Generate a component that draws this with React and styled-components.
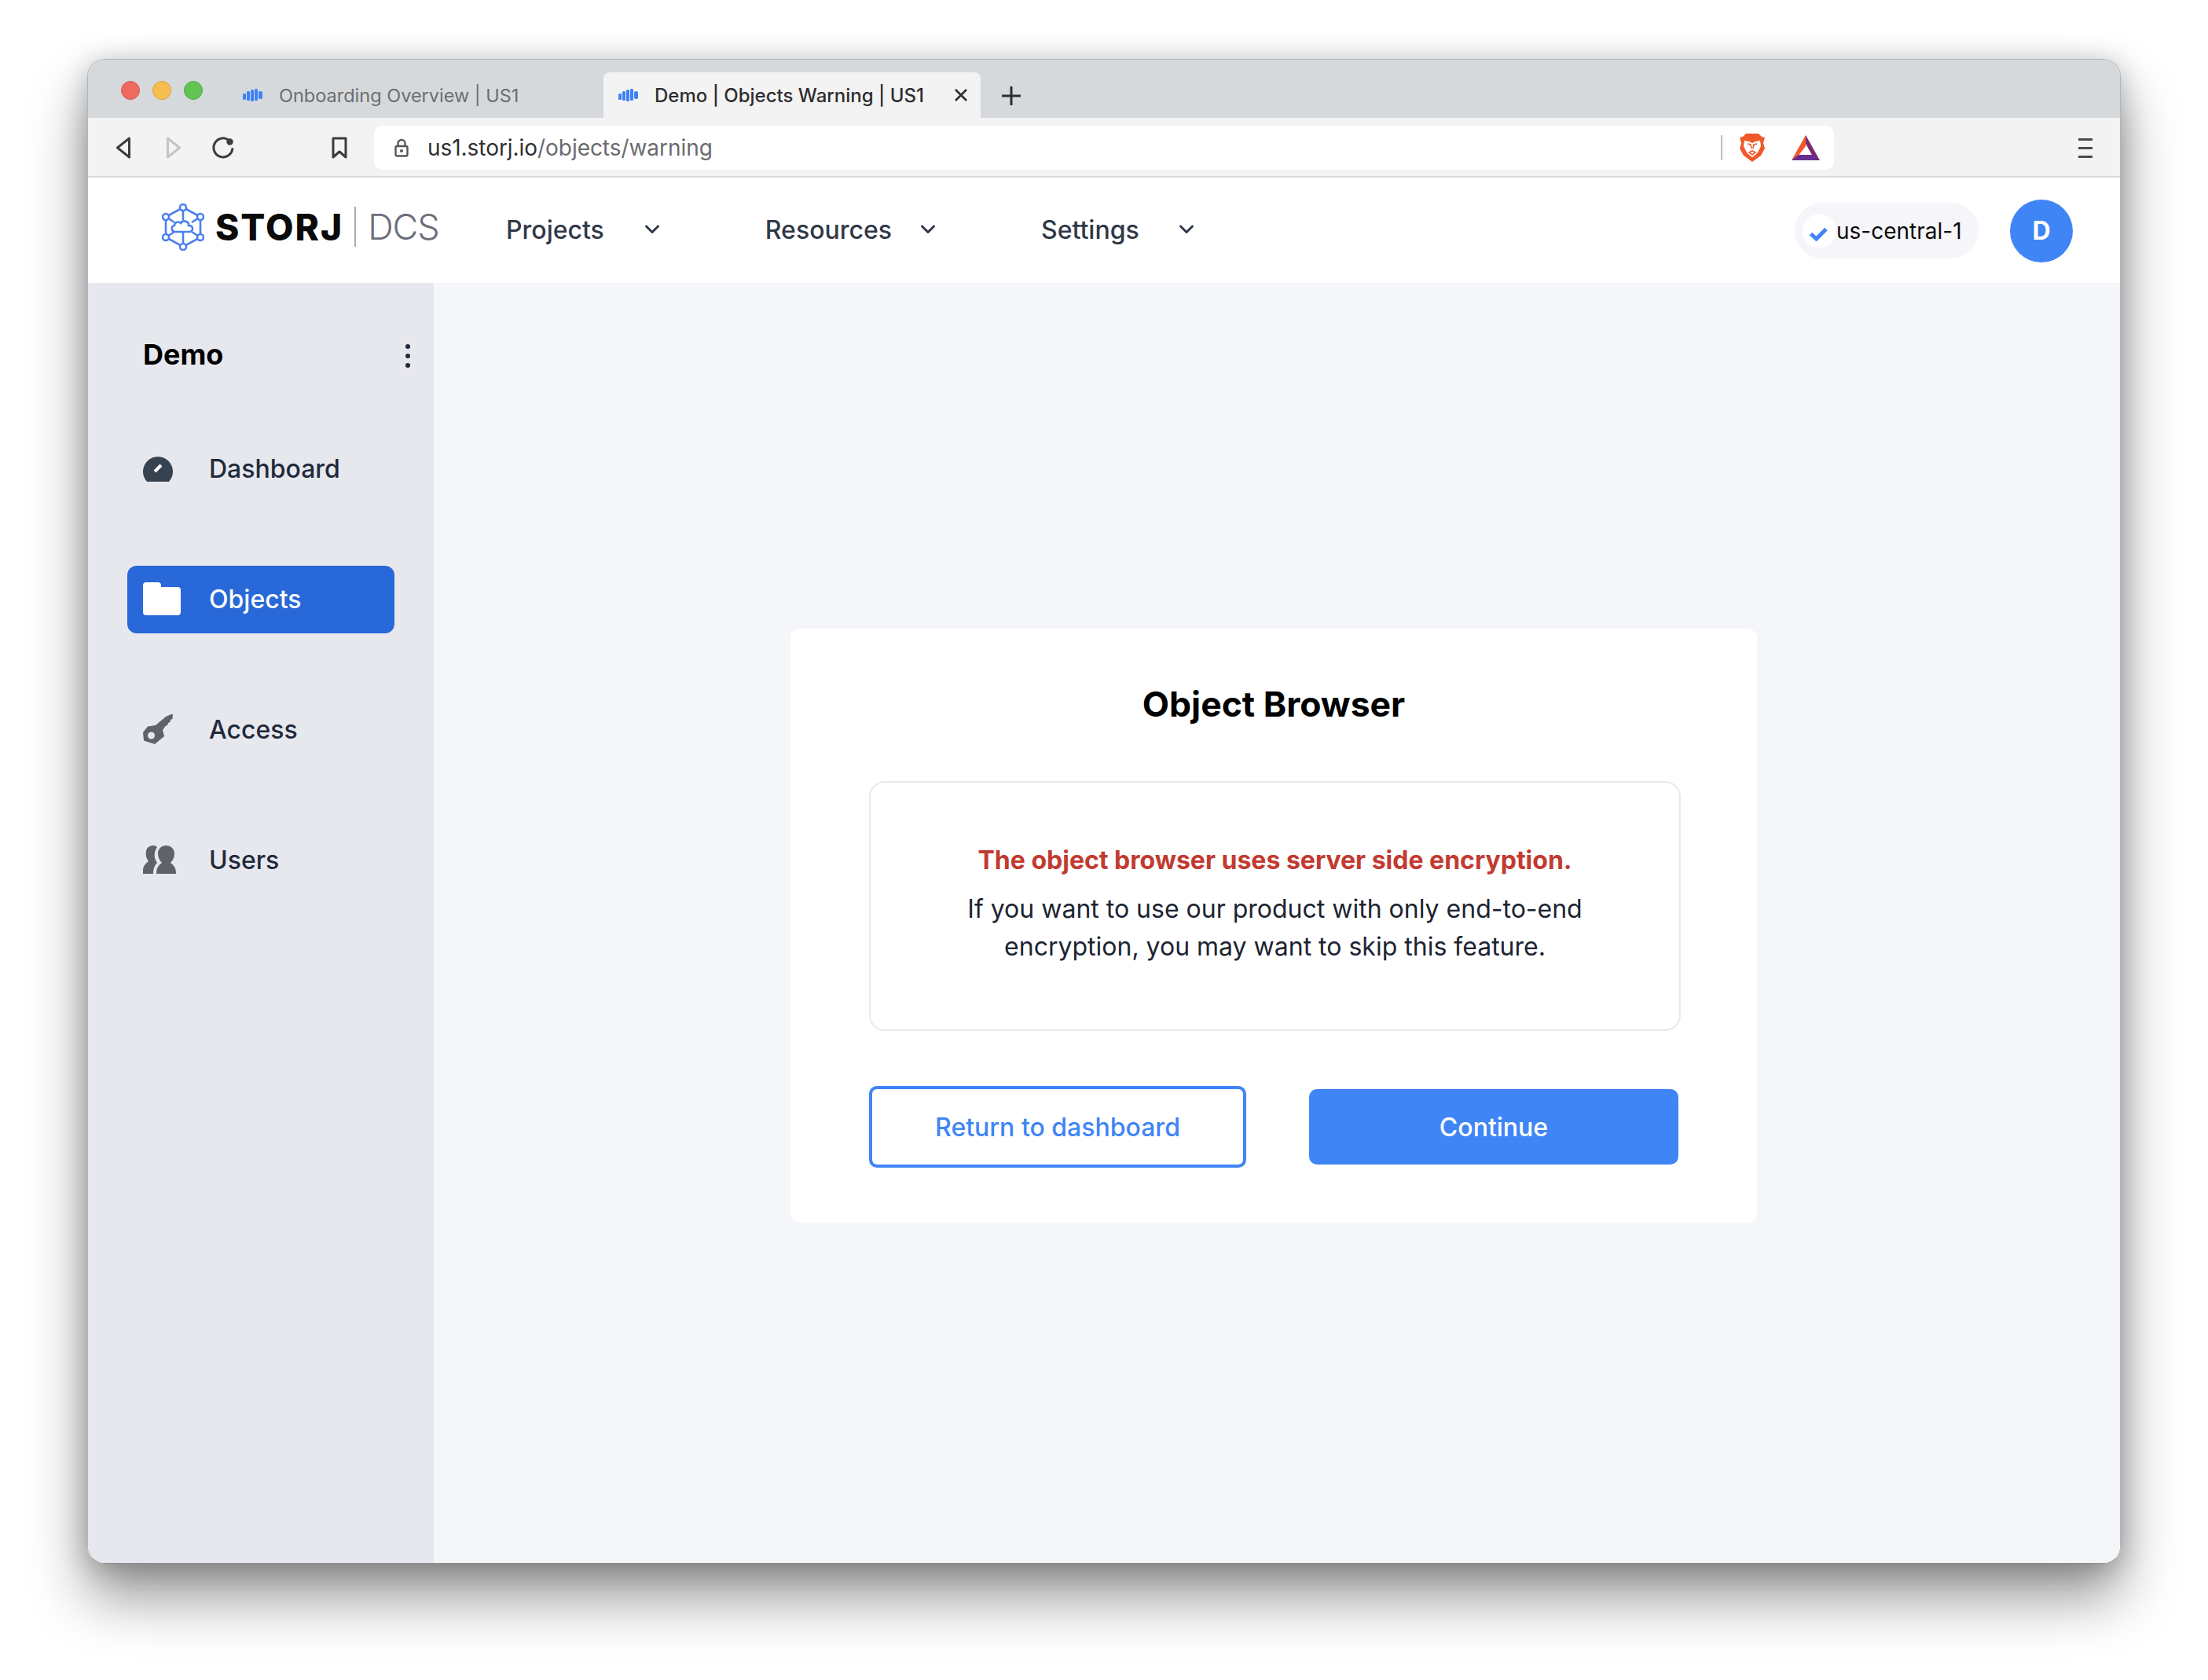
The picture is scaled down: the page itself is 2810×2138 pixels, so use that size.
import React from "react";
import styled, { createGlobalStyle } from "styled-components";

const GlobalStyle = createGlobalStyle`
  html, body {
    margin: 0;
    padding: 0;
    background: #ffffff;
    font-family: "Inter", "Liberation Sans", sans-serif;
  }
  * { box-sizing: border-box; }
`;

const Page = styled.div`
  width: 2810px;
  height: 2138px;
  padding: 75px 0 0 111px;
  overflow: hidden;
  background: #ffffff;
`;

const Shell = styled.div`
  width: 2588px;
  height: 1915px;
  border-radius: 22px;
  box-shadow: 0 42px 72px rgba(0, 0, 0, 0.42), 0 4px 34px rgba(0, 0, 0, 0.22);
`;

const Window = styled.div`
  height: 100%;
  display: flex;
  flex-direction: column;
  border-radius: 22px;
  overflow: hidden;
  border: 1px solid #b4b5b7;
  border-bottom-color: #8e8e90;
`;

const TabBar = styled.div`
  height: 74px;
  flex: none;
  display: flex;
  align-items: flex-end;
  padding-left: 42px;
  background: #d6d9dc;
`;

const Lights = styled.div`
  display: flex;
  gap: 16px;
  width: 155px;
  height: 47px;
  flex: none;
`;

const Light = styled.span`
  width: 24px;
  height: 24px;
  border-radius: 50%;
  background: ${(p) => p.$color};
  border: 1px solid ${(p) => p.$edge};
`;

const Tab = styled.div`
  width: ${(p) => p.$width}px;
  height: 58px;
  flex: none;
  display: flex;
  align-items: center;
  gap: 19px;
  padding-left: ${(p) => p.$pad}px;
  border-radius: 8px 8px 0 0;
  background: ${(p) => (p.$active ? "#f3f3f3" : "transparent")};
  color: ${(p) => (p.$active ? "#2d2d2f" : "#6b6d70")};
  font-size: ${(p) => (p.$active ? 24 : 23.5)}px;
  font-weight: ${(p) => (p.$active ? 500 : 400)};
  white-space: nowrap;
`;

const TabLabel = styled.span`
  margin-left: 1px;
`;

const CloseMark = styled.svg`
  margin-left: 19px;
`;

const NewTab = styled.svg`
  margin: 0 0 15px 26px;
`;

const Toolbar = styled.div`
  height: 76px;
  flex: none;
  display: flex;
  align-items: center;
  padding: 2px 35px 0 35px;
  background: #f3f3f3;
  border-bottom: 2px solid #d9dadc;
`;

const NavButtons = styled.div`
  display: flex;
  align-items: center;
  width: 329px;
  flex: none;
`;

const NavButton = styled.span`
  display: flex;
  margin-left: ${(p) => p.$left}px;
`;

const AddressBar = styled.div`
  width: 1858px;
  height: 56px;
  display: flex;
  align-items: center;
  padding: 0 18px 0 26px;
  border-radius: 10px;
  background: #ffffff;
`;

const UrlText = styled.span`
  margin-left: 24px;
  flex: 1;
  font-size: 28px;
  letter-spacing: -0.05px;
  color: #6a6a6c;
  b {
    font-weight: 400;
    color: #2f2f31;
  }
`;

const Separator = styled.span`
  width: 2px;
  height: 32px;
  margin-right: 22px;
  background: #bdbdbd;
`;

const ExtensionGap = styled.span`
  width: 34px;
`;

const Hamburger = styled.div`
  margin-left: auto;
  display: flex;
  flex-direction: column;
  gap: 8px;
  span {
    width: 18px;
    height: 3px;
    background: #4a4a4a;
  }
`;

const Header = styled.div`
  height: 134px;
  flex: none;
  display: flex;
  align-items: center;
  padding: 0 60px 0 94px;
  background: #ffffff;
`;

const Logo = styled.div`
  display: flex;
  align-items: center;
  width: 438px;
  flex: none;
  margin-bottom: 9px;
`;

const LogoWord = styled.span`
  margin-left: 14px;
  font-size: 46px;
  font-weight: 800;
  letter-spacing: 2px;
  color: #0a0a0a;
`;

const LogoDivider = styled.span`
  width: 2px;
  height: 51px;
  margin: 0 15px 0 14px;
  background: #a9abb1;
`;

const LogoProduct = styled.span`
  font-size: 45px;
  font-weight: 300;
  letter-spacing: -1px;
  color: #6b6e79;
`;

const Menu = styled.div`
  display: flex;
  align-items: center;
  gap: 134px;
  margin-bottom: 2px;
`;

const MenuItem = styled.div`
  display: flex;
  align-items: center;
  gap: ${(p) => p.$gap}px;
  font-size: 32px;
  font-weight: 500;
  color: #2f3947;
`;

const HeaderRight = styled.div`
  margin: 1px 0 0 auto;
  display: flex;
  align-items: center;
  gap: 40px;
`;

const RegionPill = styled.div`
  width: 234px;
  height: 71px;
  display: flex;
  align-items: center;
  padding-left: 10px;
  border-radius: 36px;
  background: #f5f5fa;
  font-size: 28px;
  color: #0b0b0b;
`;

const RegionCheck = styled.span`
  width: 43px;
  height: 44px;
  flex: none;
  display: flex;
  align-items: center;
  justify-content: center;
  padding: 8px 3px 0 0;
  border-radius: 50%;
  background: #ffffff;
`;

const Avatar = styled.div`
  width: 80px;
  height: 80px;
  display: flex;
  align-items: center;
  justify-content: center;
  border-radius: 50%;
  background: #3f85f6;
  color: #ffffff;
  font-size: 32px;
  font-weight: 700;
`;

const Body = styled.div`
  flex: 1;
  display: flex;
  min-height: 0;
`;

const Sidebar = styled.aside`
  width: 440px;
  flex: none;
  padding: 0 50px;
  background: #e7e8ee;
`;

const ProjectRow = styled.div`
  height: 182px;
  margin-bottom: 12px;
  display: flex;
  align-items: center;
  justify-content: space-between;
  padding-left: 20px;
  font-size: 36px;
  font-weight: 700;
  color: #000000;
`;

const Dots = styled.div`
  display: flex;
  flex-direction: column;
  gap: 6px;
  margin: 4px -20px 0 0;
  span {
    width: 6px;
    height: 6px;
    border-radius: 50%;
    background: #1e2a3c;
  }
`;

const NavList = styled.nav`
  display: flex;
  flex-direction: column;
  gap: 80px;
`;

const NavRow = styled.div`
  height: 86px;
  width: 340px;
  display: flex;
  align-items: center;
  padding: 0 0 2px 20px;
  border-radius: 12px;
  background: ${(p) => (p.$active ? "#2868d8" : "transparent")};
  color: ${(p) => (p.$active ? "#ffffff" : "#1f2a3b")};
  font-size: 32px;
  font-weight: 500;
`;

const NavIcon = styled.span`
  width: 84px;
  flex: none;
  display: flex;
  align-items: center;
`;

const Main = styled.main`
  flex: 1;
  padding: 440px 0 0 454px;
  background: #f5f6fa;
`;

const Card = styled.section`
  width: 1230px;
  height: 756px;
  padding: 0 100px;
  border-radius: 12px;
  background: #ffffff;
`;

const Title = styled.h1`
  margin: 0 0 2px;
  height: 192px;
  display: flex;
  align-items: center;
  justify-content: center;
  font-size: 44.5px;
  font-weight: 700;
  color: #000000;
`;

const Notice = styled.div`
  width: 1033px;
  height: 318px;
  padding-top: 75px;
  border: 2px solid #e8e9ee;
  border-radius: 20px;
  text-align: center;
`;

const NoticeHeading = styled.div`
  font-size: 32px;
  font-weight: 700;
  line-height: 48px;
  margin-bottom: 14px;
  color: #c23a30;
`;

const NoticeText = styled.p`
  margin: 0;
  font-size: 32px;
  line-height: 48px;
  color: #1c2432;
`;

const Actions = styled.div`
  display: flex;
  align-items: center;
  margin-top: 70px;
`;

const Button = styled.button`
  height: ${(p) => (p.$primary ? 96 : 104)}px;
  width: ${(p) => (p.$primary ? 470 : 480)}px;
  margin-left: ${(p) => (p.$primary ? 80 : 0)}px;
  border: ${(p) => (p.$primary ? "0" : "4px solid #3f85f6")};
  border-radius: 10px;
  background: ${(p) => (p.$primary ? "#3f85f6" : "#ffffff")};
  color: ${(p) => (p.$primary ? "#ffffff" : "#3f85f6")};
  font-family: inherit;
  font-size: 32px;
  font-weight: 500;
`;

const Favicon = () => (
  <svg width="26" height="16" viewBox="0 0 26 16" fill="#3f82f7">
    <rect x="0" y="6" width="4" height="8" rx="1.5" />
    <rect x="5" y="3" width="4" height="12" rx="1.5" />
    <rect x="10" y="1" width="4" height="15" rx="1.5" />
    <rect x="15" y="0" width="4" height="15" rx="1.5" />
    <rect x="20" y="3" width="5" height="10" rx="2" />
  </svg>
);

const BackIcon = ({ flip, color }) => (
  <svg width="20" height="28" viewBox="0 0 20 28" style={flip ? { transform: "scaleX(-1)" } : undefined}>
    <path d="M17.5 2 L2.5 14 L17.5 26 Z" fill="none" stroke={color} strokeWidth="3" strokeLinejoin="round" />
  </svg>
);

const ReloadIcon = () => (
  <svg width="28" height="28" viewBox="0 0 28 28">
    <path d="M21 4.2 A12 12 0 1 0 25.8 15.5" fill="none" stroke="#3c3c3c" strokeWidth="3" strokeLinecap="round" />
    <circle cx="22.5" cy="6.5" r="4.2" fill="#3c3c3c" />
  </svg>
);

const BookmarkIcon = () => (
  <svg width="22" height="28" viewBox="0 0 22 28">
    <path d="M3 2 H19 V26 L11 19 L3 26 Z" fill="none" stroke="#3c3c3c" strokeWidth="3" strokeLinejoin="round" />
  </svg>
);

const LockIcon = () => (
  <svg width="18" height="24" viewBox="0 0 18 24">
    <path d="M4.5 10 V6.5 A4.5 4.5 0 0 1 13.5 6.5 V10" fill="none" stroke="#55565a" strokeWidth="2.4" />
    <rect x="1.5" y="10" width="15" height="12.5" rx="2" fill="none" stroke="#55565a" strokeWidth="2.4" />
    <circle cx="9" cy="16" r="2" fill="#55565a" />
  </svg>
);

const BraveIcon = () => (
  <svg width="32" height="36" viewBox="0 0 32 36">
    <path d="M8 0 H24 L28 4 L32 5 L30 12 L32 19 L27 28 L16 36 L5 28 L0 19 L2 12 L0 5 L4 4 Z" fill="#f0592a" />
    <path d="M6 9 L12 10 L16 12 L20 10 L26 9 L27 16 L23 24 L19 28 L16 30 L13 28 L9 24 L5 16 Z" fill="#ffffff" />
    <path d="M10 13 L14 14 L15 19 M22 13 L18 14 L17 19 M12 24 L16 22 L20 24 L16 27 Z" fill="none" stroke="#f0592a" strokeWidth="1.6" />
  </svg>
);

const BatIcon = () => (
  <svg width="36" height="32" viewBox="0 0 36 32">
    <polygon points="18,0 18,14 8,27 0,32" fill="#f1592c" />
    <polygon points="18,0 36,32 27,27 18,11" fill="#7d2a6d" />
    <polygon points="0,32 36,32 27,25 9,25" fill="#662d91" />
  </svg>
);

const StorjLogo = () => (
  <svg width="54" height="60" viewBox="0 0 54 60" fill="none" stroke="#4b7ff0" strokeWidth="2.6">
    <path d="M27 5 L49 17 V43 L27 55 L5 43 V17 Z" />
    <path d="M27 5 V21 M49 17 L38 24 M5 17 L16 24 M49 43 L38 36 M5 43 L16 36 M27 55 V36" />
    <path d="M17 36 C12 36 11 29 16 28 C16 24 21 22 24 25 C27 20 35 23 34 28 C41 28 40 36 35 36 Z" fill="#ffffff" />
    <g fill="#ffffff">
      <circle cx="27" cy="5" r="4" />
      <circle cx="49" cy="17" r="4" />
      <circle cx="49" cy="43" r="4" />
      <circle cx="27" cy="55" r="4" />
      <circle cx="5" cy="43" r="4" />
      <circle cx="5" cy="17" r="4" />
    </g>
  </svg>
);

const Chevron = () => (
  <svg width="20" height="12" viewBox="0 0 20 12">
    <path d="M2.5 2 L10 9.5 L17.5 2" fill="none" stroke="#2f3947" strokeWidth="3" strokeLinecap="round" strokeLinejoin="round" />
  </svg>
);

const GaugeIcon = () => (
  <svg width="38" height="34" viewBox="0 0 38 34">
    <path d="M5 34 A19 19 0 1 1 33 34 Z" fill="#374250" />
    <path d="M15 21 L23 13" stroke="#ffffff" strokeWidth="4" />
  </svg>
);

const FolderIcon = () => (
  <svg width="48" height="42" viewBox="0 0 48 42">
    <path d="M0 4 A4 4 0 0 1 4 0 H19 A4 4 0 0 1 23 4 V6 H44 A4 4 0 0 1 48 10 V38 A4 4 0 0 1 44 42 H4 A4 4 0 0 1 0 38 Z" fill="#ffffff" />
  </svg>
);

const KeyIcon = () => (
  <svg width="38" height="38" viewBox="0 0 38 38">
    <path d="M29 3 L36 0 H38 L37.5 6 L35 7 L34.5 10 L32 11 L31 14 L28.5 15 L25 20 L27 28 L15 38 L1 33.5 L0 23 L6 15.5 L16 14 Z" fill="#5d6369" />
    <circle cx="10.5" cy="27" r="4.5" fill="#e7e8ee" />
  </svg>
);

const UsersIcon = () => (
  <svg width="42" height="36" viewBox="0 0 42 36" fill="#5d6369">
    <path d="M0 36 V31 C0 25 5 22 7 20 C4 16 3 12 4 7 C5 2 9 0 13 0 C16 0 17 1 18 2 C15 6 14 11 15 16 C16 19 17 21 18 22 C15 25 13 29 13 36 Z" />
    <path d="M17 36 C17 28 20 25 24 22 C21 19 19 15 19 10 C19 4 24 0 29 0 C35 0 40 4 40 10 C40 15 38 19 35 22 C39 25 42 28 42 36 Z" />
  </svg>
);

const navItems = [
  { label: "Dashboard", icon: <GaugeIcon /> },
  { label: "Objects", icon: <FolderIcon />, active: true },
  { label: "Access", icon: <KeyIcon /> },
  { label: "Users", icon: <UsersIcon /> },
];

const menuItems = [
  { label: "Projects", gap: 51 },
  { label: "Resources", gap: 36 },
  { label: "Settings", gap: 50 },
];

export default function App() {
  return (
    <>
      <GlobalStyle />
      <Page>
        <Shell>
          <Window>
            <TabBar>
              <Lights>
                <Light $color="#ee6a5f" $edge="#d6564c" />
                <Light $color="#f6be4f" $edge="#dca23a" />
                <Light $color="#61c454" $edge="#4eab42" />
              </Lights>
              <Tab $width="459" $pad="0">
                <Favicon />
                <TabLabel>Onboarding Overview | US1</TabLabel>
              </Tab>
              <Tab $active $width="480" $pad="19">
                <Favicon />
                <TabLabel>Demo | Objects Warning | US1</TabLabel>
                <CloseMark width="18" height="18" viewBox="0 0 18 18">
                  <path d="M2 2 L16 16 M16 2 L2 16" stroke="#2d2d2f" strokeWidth="2.6" />
                </CloseMark>
              </Tab>
              <NewTab width="26" height="26" viewBox="0 0 26 26">
                <path d="M13 1 V25 M1 13 H25" stroke="#2d2d2f" strokeWidth="3" />
              </NewTab>
            </TabBar>
            <Toolbar>
              <NavButtons>
                <NavButton $left="0">
                  <BackIcon color="#3c3c3c" />
                </NavButton>
                <NavButton $left="44">
                  <BackIcon flip color="#c4c4c4" />
                </NavButton>
                <NavButton $left="39">
                  <ReloadIcon />
                </NavButton>
                <NavButton $left="123">
                  <BookmarkIcon />
                </NavButton>
              </NavButtons>
              <AddressBar>
                <LockIcon />
                <UrlText>
                  <b>us1.storj.io</b>/objects/warning
                </UrlText>
                <Separator />
                <BraveIcon />
                <ExtensionGap />
                <BatIcon />
              </AddressBar>
              <Hamburger>
                <span />
                <span />
                <span />
              </Hamburger>
            </Toolbar>
            <Header>
              <Logo>
                <StorjLogo />
                <LogoWord>STORJ</LogoWord>
                <LogoDivider />
                <LogoProduct>DCS</LogoProduct>
              </Logo>
              <Menu>
                {menuItems.map((item) => (
                  <MenuItem key={item.label} $gap={item.gap}>
                    {item.label}
                    <Chevron />
                  </MenuItem>
                ))}
              </Menu>
              <HeaderRight>
                <RegionPill>
                  <RegionCheck>
                    <svg width="24" height="18" viewBox="0 0 24 18">
                      <path d="M2.5 8.5 L9.5 15 L22 2.5" fill="none" stroke="#3f85f6" strokeWidth="5" />
                    </svg>
                  </RegionCheck>
                  us-central-1
                </RegionPill>
                <Avatar>D</Avatar>
              </HeaderRight>
            </Header>
            <Body>
              <Sidebar>
                <ProjectRow>
                  Demo
                  <Dots>
                    <span />
                    <span />
                    <span />
                  </Dots>
                </ProjectRow>
                <NavList>
                  {navItems.map((item) => (
                    <NavRow key={item.label} $active={item.active}>
                      <NavIcon>{item.icon}</NavIcon>
                      {item.label}
                    </NavRow>
                  ))}
                </NavList>
              </Sidebar>
              <Main>
                <Card>
                  <Title>Object Browser</Title>
                  <Notice>
                    <NoticeHeading>The object browser uses server side encryption.</NoticeHeading>
                    <NoticeText>
                      If you want to use our product with only end-to-end
                      <br />
                      encryption, you may want to skip this feature.
                    </NoticeText>
                  </Notice>
                  <Actions>
                    <Button>Return to dashboard</Button>
                    <Button $primary>Continue</Button>
                  </Actions>
                </Card>
              </Main>
            </Body>
          </Window>
        </Shell>
      </Page>
    </>
  );
}
